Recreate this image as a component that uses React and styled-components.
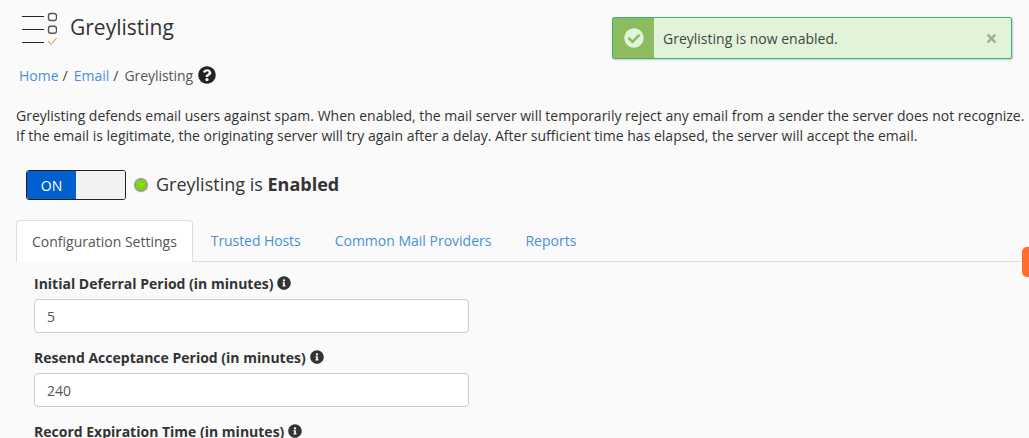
import React from "react";
import styled, { createGlobalStyle } from "styled-components";
import { FaCheckCircle, FaQuestionCircle, FaInfoCircle, FaTimes } from "react-icons/fa";

const GlobalStyle = createGlobalStyle`
  html, body {
    margin: 0;
    height: 100%;
    overflow: hidden;
    background: #fafafa;
    font-family: "Open Sans", sans-serif;
    font-size: 14px;
    color: #333;
  }
`;

const Page = styled.div`
  width: 1029px;
  height: 438px;
  overflow: hidden;
  position: relative;
  padding: 0 0 0 16px;
  box-sizing: border-box;
`;

const Header = styled.div`
  display: flex;
  align-items: center;
  height: 56px;
  padding-left: 5px;
`;

const Title = styled.h1`
  margin: 0 0 0 13px;
  font-size: 21px;
  font-weight: 400;
  color: #333;
  line-height: 30px;
  position: relative;
  top: -1px;
`;

const Breadcrumb = styled.div`
  display: flex;
  align-items: center;
  height: 24px;
  margin: 7px 0 0 3px;
  color: #555;
`;

const Crumb = styled.a`
  color: #4a90d9;
`;

const Slash = styled.span`
  margin: 0 6px 0 4px;
  color: #444;
`;

const Current = styled.span`
  letter-spacing: -0.05px;
`;

const HelpIcon = styled(FaQuestionCircle)`
  margin-left: 5px;
  font-size: 18px;
  color: #222;
`;

const Description = styled.p`
  margin: 19px 0 0;
  width: 1013px;
  font-size: 14px;
  line-height: 20px;
  white-space: nowrap;
  color: #333;
`;

const StatusRow = styled.div`
  display: flex;
  align-items: center;
  margin: 24px 0 0 10px;
  height: 30px;
`;

const Toggle = styled.div`
  display: flex;
  width: 100px;
  height: 30px;
  box-sizing: border-box;
  border: 1px solid #222;
  border-radius: 3px;
  overflow: hidden;
`;

const ToggleOn = styled.div`
  width: 49px;
  background: #0060d0;
  color: #fff;
  display: flex;
  align-items: center;
  justify-content: center;
`;

const ToggleOff = styled.div`
  flex: 1;
  background: #f2f2f2;
`;

const Led = styled.span`
  width: 10px;
  height: 10px;
  margin: -1px 0 0 10px;
  border-radius: 50%;
  background: radial-gradient(circle at 50% 45%, #8ee800 0, #70d000 65%, #4f9a00 100%);
  box-shadow: 0 0 1px 2px rgba(70, 90, 50, 0.6);
`;

const StatusText = styled.div`
  margin: -2px 0 0 10px;
  font-size: 18px;
  color: #333;
`;

const Tabs = styled.div`
  display: flex;
  height: 42px;
  margin-top: 19px;
  border-bottom: 1px solid #ddd;
`;

const Tab = styled.div`
  display: flex;
  align-items: center;
  padding: 0 15px;
  margin-right: 2px;
  box-sizing: border-box;
  letter-spacing: ${(p) => (p.$tight ? "-0.08px" : "normal")};
  color: ${(p) => (p.$active ? "#555" : "#4a90d9")};
  background: ${(p) => (p.$active ? "#fff" : "transparent")};
  border: 1px solid ${(p) => (p.$active ? "#ddd" : "transparent")};
  border-bottom: ${(p) => (p.$active ? "none" : "1px solid transparent")};
  border-radius: 4px 4px 0 0;
  margin-top: ${(p) => (p.$active ? "1px" : "0")};
  margin-bottom: ${(p) => (p.$active ? "-1px" : "0")};
  padding-bottom: ${(p) => (p.$active ? "1px" : "0")};
  height: 42px;
`;

const Form = styled.div`
  padding: 11px 0 0 18px;
`;

const Field = styled.div`
  margin-bottom: 14px;
`;

const Label = styled.label`
  display: flex;
  align-items: center;
  height: 20px;
  font-weight: 700;
  font-size: 14px;
  color: #333;
`;

const InfoIcon = styled(FaInfoCircle)`
  margin-left: 4px;
  font-size: 14px;
  color: #333;
`;

const Input = styled.input`
  display: block;
  width: 435px;
  height: 34px;
  margin-top: 6px;
  box-sizing: border-box;
  padding: 0 12px;
  border: 1px solid #ccc;
  border-radius: 4px;
  background: #fff;
  font-family: "Open Sans", sans-serif;
  font-size: 14px;
  color: #555;
`;

const Alert = styled.div`
  position: absolute;
  top: 17px;
  left: 612px;
  width: 400px;
  height: 42px;
  display: flex;
  box-sizing: border-box;
  border: 1px solid #3cb371;
  border-radius: 2px;
  background: #e1f3d8;
  box-shadow: 1px 1px 2px rgba(0, 0, 0, 0.2);
`;

const AlertIconBox = styled.div`
  width: 41px;
  background: #8cbc5f;
  display: flex;
  align-items: center;
  justify-content: center;
  color: #e1f3d8;
  font-size: 20px;
`;

const AlertText = styled.div`
  flex: 1;
  display: flex;
  align-items: center;
  padding-left: 9px;
  color: #444;
`;

const Close = styled(FaTimes)`
  align-self: center;
  margin-right: 13px;
  font-size: 13px;
  color: #9bb092;
`;

const SideTab = styled.div`
  position: absolute;
  top: 247px;
  right: 0;
  width: 7px;
  height: 30px;
  background: #ff6c2c;
  border-radius: 5px 0 0 5px;
`;

function ListIcon() {
  return (
    <svg width="36" height="36" viewBox="0 0 36 36" fill="none">
      <path d="M1 6.5h22M1 19.5h22M1 32.5h22" stroke="#222" strokeWidth="1" />
      <rect x="27.5" y="3.5" width="8" height="7" rx="2.2" stroke="#555" strokeWidth="1.4" />
      <rect x="27.5" y="16.2" width="8" height="7" rx="2.2" stroke="#555" strokeWidth="1.4" />
      <path d="M27 31l3 3.5 5.5-6.5" stroke="#f08040" strokeWidth="1" />
    </svg>
  );
}

function Fields() {
  const fields = [
    { label: "Initial Deferral Period (in minutes)", value: "5" },
    { label: "Resend Acceptance Period (in minutes)", value: "240" },
    { label: "Record Expiration Time (in minutes)", value: "" },
  ];
  return fields.map((f) => (
    <Field key={f.label}>
      <Label>
        {f.label} <InfoIcon />
      </Label>
      <Input defaultValue={f.value} />
    </Field>
  ));
}

export default function App() {
  return (
    <Page>
      <GlobalStyle />
      <Header>
        <ListIcon />
        <Title>Greylisting</Title>
      </Header>
      <Breadcrumb>
        <Crumb>Home</Crumb>
        <Slash>/</Slash>
        <Crumb>Email</Crumb>
        <Slash>/</Slash>
        <Current>Greylisting</Current>
        <HelpIcon />
      </Breadcrumb>
      <Description>
        Greylisting defends email users against spam. When enabled, the mail server will temporarily reject any email from a sender the server does not recognize.
        <br />
        If the email is legitimate, the originating server will try again after a delay. After sufficient time has elapsed, the server will accept the email.
      </Description>
      <StatusRow>
        <Toggle>
          <ToggleOn>ON</ToggleOn>
          <ToggleOff />
        </Toggle>
        <Led />
        <StatusText>
          Greylisting is <b>Enabled</b>
        </StatusText>
      </StatusRow>
      <Tabs>
        <Tab $active>Configuration Settings</Tab>
        <Tab $tight>Trusted Hosts</Tab>
        <Tab>Common Mail Providers</Tab>
        <Tab>Reports</Tab>
      </Tabs>
      <Form>
        <Fields />
      </Form>
      <Alert>
        <AlertIconBox>
          <FaCheckCircle />
        </AlertIconBox>
        <AlertText>Greylisting is now enabled.</AlertText>
        <Close />
      </Alert>
      <SideTab />
    </Page>
  );
}
